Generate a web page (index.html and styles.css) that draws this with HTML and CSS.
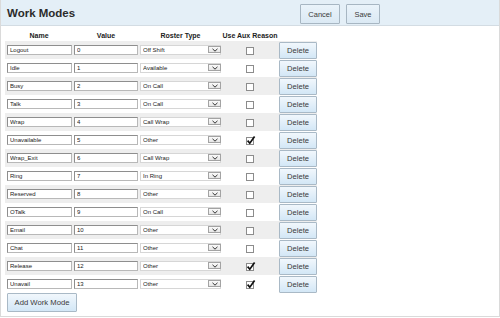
FILE: index.html
```html
<!DOCTYPE html>
<html>
<head>
<meta charset="utf-8">
<link rel="stylesheet" href="styles.css">
</head>
<body>
<div class="panel">
  <div class="header">
    <h1 class="title">Work Modes</h1>
    <div class="actions">
      <button class="btn btn-head cancel">Cancel</button>
      <button class="btn btn-head save">Save</button>
    </div>
  </div>
  <div class="content">
    <table class="modes">
      <colgroup>
        <col class="c-name"><col class="c-value"><col class="c-type"><col class="c-aux"><col class="c-del">
      </colgroup>
      <thead>
        <tr><th>Name</th><th>Value</th><th>Roster Type</th><th>Use Aux Reason</th><th></th></tr>
      </thead>
      <tbody>
        <tr class="alt"><td class="td-name"><input class="txt name" value="Logout"></td><td><input class="txt val" value="0"></td><td><span class="sel"><select><option>Off Shift</option></select><span class="arrow"><svg width="6" height="4" viewBox="0 0 6 4"><path d="M0.5 0.8 L3 3.2 L5.5 0.8" fill="none" stroke="#333" stroke-width="1"/></svg></span></span></td><td class="td-aux"><span class="cb"></span></td><td class="td-del"><button class="btn del">Delete</button></td></tr>
        <tr><td class="td-name"><input class="txt name" value="Idle"></td><td><input class="txt val" value="1"></td><td><span class="sel"><select><option>Available</option></select><span class="arrow"><svg width="6" height="4" viewBox="0 0 6 4"><path d="M0.5 0.8 L3 3.2 L5.5 0.8" fill="none" stroke="#333" stroke-width="1"/></svg></span></span></td><td class="td-aux"><span class="cb"></span></td><td class="td-del"><button class="btn del">Delete</button></td></tr>
        <tr class="alt"><td class="td-name"><input class="txt name" value="Busy"></td><td><input class="txt val" value="2"></td><td><span class="sel"><select><option>On Call</option></select><span class="arrow"><svg width="6" height="4" viewBox="0 0 6 4"><path d="M0.5 0.8 L3 3.2 L5.5 0.8" fill="none" stroke="#333" stroke-width="1"/></svg></span></span></td><td class="td-aux"><span class="cb"></span></td><td class="td-del"><button class="btn del">Delete</button></td></tr>
        <tr><td class="td-name"><input class="txt name" value="Talk"></td><td><input class="txt val" value="3"></td><td><span class="sel"><select><option>On Call</option></select><span class="arrow"><svg width="6" height="4" viewBox="0 0 6 4"><path d="M0.5 0.8 L3 3.2 L5.5 0.8" fill="none" stroke="#333" stroke-width="1"/></svg></span></span></td><td class="td-aux"><span class="cb"></span></td><td class="td-del"><button class="btn del">Delete</button></td></tr>
        <tr class="alt"><td class="td-name"><input class="txt name" value="Wrap"></td><td><input class="txt val" value="4"></td><td><span class="sel"><select><option>Call Wrap</option></select><span class="arrow"><svg width="6" height="4" viewBox="0 0 6 4"><path d="M0.5 0.8 L3 3.2 L5.5 0.8" fill="none" stroke="#333" stroke-width="1"/></svg></span></span></td><td class="td-aux"><span class="cb"></span></td><td class="td-del"><button class="btn del">Delete</button></td></tr>
        <tr><td class="td-name"><input class="txt name" value="Unavailable"></td><td><input class="txt val" value="5"></td><td><span class="sel"><select><option>Other</option></select><span class="arrow"><svg width="6" height="4" viewBox="0 0 6 4"><path d="M0.5 0.8 L3 3.2 L5.5 0.8" fill="none" stroke="#333" stroke-width="1"/></svg></span></span></td><td class="td-aux"><span class="cb checked"><svg width="10" height="10" viewBox="0 0 10 10"><path d="M1.6 4.6 L3.8 7.2 L8.6 0.6" fill="none" stroke="#111" stroke-width="1.7"/></svg></span></td><td class="td-del"><button class="btn del">Delete</button></td></tr>
        <tr class="alt"><td class="td-name"><input class="txt name" value="Wrap_Exit"></td><td><input class="txt val" value="6"></td><td><span class="sel"><select><option>Call Wrap</option></select><span class="arrow"><svg width="6" height="4" viewBox="0 0 6 4"><path d="M0.5 0.8 L3 3.2 L5.5 0.8" fill="none" stroke="#333" stroke-width="1"/></svg></span></span></td><td class="td-aux"><span class="cb"></span></td><td class="td-del"><button class="btn del">Delete</button></td></tr>
        <tr><td class="td-name"><input class="txt name" value="Ring"></td><td><input class="txt val" value="7"></td><td><span class="sel"><select><option>In Ring</option></select><span class="arrow"><svg width="6" height="4" viewBox="0 0 6 4"><path d="M0.5 0.8 L3 3.2 L5.5 0.8" fill="none" stroke="#333" stroke-width="1"/></svg></span></span></td><td class="td-aux"><span class="cb"></span></td><td class="td-del"><button class="btn del">Delete</button></td></tr>
        <tr class="alt"><td class="td-name"><input class="txt name" value="Reserved"></td><td><input class="txt val" value="8"></td><td><span class="sel"><select><option>Other</option></select><span class="arrow"><svg width="6" height="4" viewBox="0 0 6 4"><path d="M0.5 0.8 L3 3.2 L5.5 0.8" fill="none" stroke="#333" stroke-width="1"/></svg></span></span></td><td class="td-aux"><span class="cb"></span></td><td class="td-del"><button class="btn del">Delete</button></td></tr>
        <tr><td class="td-name"><input class="txt name" value="OTalk"></td><td><input class="txt val" value="9"></td><td><span class="sel"><select><option>On Call</option></select><span class="arrow"><svg width="6" height="4" viewBox="0 0 6 4"><path d="M0.5 0.8 L3 3.2 L5.5 0.8" fill="none" stroke="#333" stroke-width="1"/></svg></span></span></td><td class="td-aux"><span class="cb"></span></td><td class="td-del"><button class="btn del">Delete</button></td></tr>
        <tr class="alt"><td class="td-name"><input class="txt name" value="Email"></td><td><input class="txt val" value="10"></td><td><span class="sel"><select><option>Other</option></select><span class="arrow"><svg width="6" height="4" viewBox="0 0 6 4"><path d="M0.5 0.8 L3 3.2 L5.5 0.8" fill="none" stroke="#333" stroke-width="1"/></svg></span></span></td><td class="td-aux"><span class="cb"></span></td><td class="td-del"><button class="btn del">Delete</button></td></tr>
        <tr><td class="td-name"><input class="txt name" value="Chat"></td><td><input class="txt val" value="11"></td><td><span class="sel"><select><option>Other</option></select><span class="arrow"><svg width="6" height="4" viewBox="0 0 6 4"><path d="M0.5 0.8 L3 3.2 L5.5 0.8" fill="none" stroke="#333" stroke-width="1"/></svg></span></span></td><td class="td-aux"><span class="cb"></span></td><td class="td-del"><button class="btn del">Delete</button></td></tr>
        <tr class="alt"><td class="td-name"><input class="txt name" value="Release"></td><td><input class="txt val" value="12"></td><td><span class="sel"><select><option>Other</option></select><span class="arrow"><svg width="6" height="4" viewBox="0 0 6 4"><path d="M0.5 0.8 L3 3.2 L5.5 0.8" fill="none" stroke="#333" stroke-width="1"/></svg></span></span></td><td class="td-aux"><span class="cb checked"><svg width="10" height="10" viewBox="0 0 10 10"><path d="M1.6 4.6 L3.8 7.2 L8.6 0.6" fill="none" stroke="#111" stroke-width="1.7"/></svg></span></td><td class="td-del"><button class="btn del">Delete</button></td></tr>
        <tr><td class="td-name"><input class="txt name" value="Unavail"></td><td><input class="txt val" value="13"></td><td><span class="sel"><select><option>Other</option></select><span class="arrow"><svg width="6" height="4" viewBox="0 0 6 4"><path d="M0.5 0.8 L3 3.2 L5.5 0.8" fill="none" stroke="#333" stroke-width="1"/></svg></span></span></td><td class="td-aux"><span class="cb checked"><svg width="10" height="10" viewBox="0 0 10 10"><path d="M1.6 4.6 L3.8 7.2 L8.6 0.6" fill="none" stroke="#111" stroke-width="1.7"/></svg></span></td><td class="td-del"><button class="btn del">Delete</button></td></tr>
      </tbody>
    </table>
    <button class="btn add">Add Work Mode</button>
  </div>
</div>
</body>
</html>
```
FILE: styles.css
```css
* { box-sizing: border-box; }
html, body { margin: 0; padding: 0; background: #fff; }
body { font-family: "Liberation Sans", Arial, sans-serif; color: #222; }

.panel {
  width: 500px;
  height: 317px;
  border: 1px solid #dadada;
  border-top: none;
}

.header {
  display: flex;
  align-items: center;
  height: 26px;
  padding: 0 119px 0 6px;
  background: #e4eff7;
  border-bottom: 1px solid #d3dce3;
}
.title {
  flex: 1;
  margin: 0;
  font-size: 11.5px;
  line-height: 14px;
  font-weight: bold;
  color: #2b2b2b;
}
.actions {
  display: flex;
  gap: 6px;
  align-self: flex-start;
  margin-top: 4px;
}

.btn {
  font-family: "Liberation Sans", Arial, sans-serif;
  color: #3a3a3a;
  border: 1px solid #a9b9c6;
  border-radius: 1px;
  background: linear-gradient(#f1f7fc, #d3e7f6);
  padding: 0;
  margin: 0;
  cursor: pointer;
}
.btn-head {
  height: 20px;
  font-size: 7.5px;
  background: linear-gradient(#eaf3fa, #dbe9f4);
  border-color: #a7b6c2;
}
.cancel { width: 40px; }
.save { width: 34px; }

.content {
  padding: 5px 0 0 4px;
}

.modes {
  border-collapse: separate;
  border-spacing: 0;
  table-layout: fixed;
  width: 312px;
}
.c-name { width: 68px; }
.c-value { width: 66px; }
.c-type { width: 83px; }
.c-aux { width: 56px; }
.c-del { width: 39px; }

.modes th {
  height: 10px;
  padding: 0;
  font-size: 7px;
  line-height: 10px;
  font-weight: bold;
  color: #222;
  text-align: center;
}
.modes td {
  height: 18px;
  padding: 0 1px;
  vertical-align: middle;
}
.modes td.td-name { padding-left: 2px; }
.modes tr.alt td { background: #eeeeee; }
.modes td.td-aux { text-align: center; }

.txt {
  display: block;
  height: 10px;
  margin: 0;
  padding: 0 0 0 2px;
  font-family: "Liberation Sans", Arial, sans-serif;
  font-size: 6px;
  color: #222;
  background: #fff;
  border: 1px solid;
  border-color: #8e8e8e #b8b8b8 #b8b8b8 #8e8e8e;
  outline: none;
}
.txt.name { width: 65px; }
.txt.val { width: 64px; }

.sel {
  position: relative;
  display: block;
  width: 81px;
  height: 10px;
}
.sel select {
  appearance: none;
  -webkit-appearance: none;
  display: block;
  width: 81px;
  height: 10px;
  margin: 0;
  padding: 0 0 0 2px;
  font-family: "Liberation Sans", Arial, sans-serif;
  font-size: 6px;
  line-height: 8px;
  color: #222;
  background: #fff;
  border: 1px solid #d6d6d6;
  border-radius: 0;
}
.sel .arrow {
  position: absolute;
  right: 0;
  top: 1px;
  width: 13px;
  height: 7px;
  border: 1px solid #a3a3a3;
  background: linear-gradient(#fafafa, #e6e6e6);
  display: flex;
  align-items: center;
  justify-content: center;
}
.sel .arrow svg { display: block; }

.cb {
  position: relative;
  display: inline-block;
  vertical-align: middle;
  width: 8px;
  height: 8px;
  border: 1px solid #8c8c8c;
  background: #fff;
}
.cb svg {
  position: absolute;
  left: -1px;
  top: -2px;
}

.del {
  display: block;
  width: 38px;
  height: 17px;
  font-size: 7.6px;
}

.add {
  display: block;
  margin: 0 0 0 2px;
  width: 70px;
  height: 19px;
  font-size: 7.7px;
}
```
